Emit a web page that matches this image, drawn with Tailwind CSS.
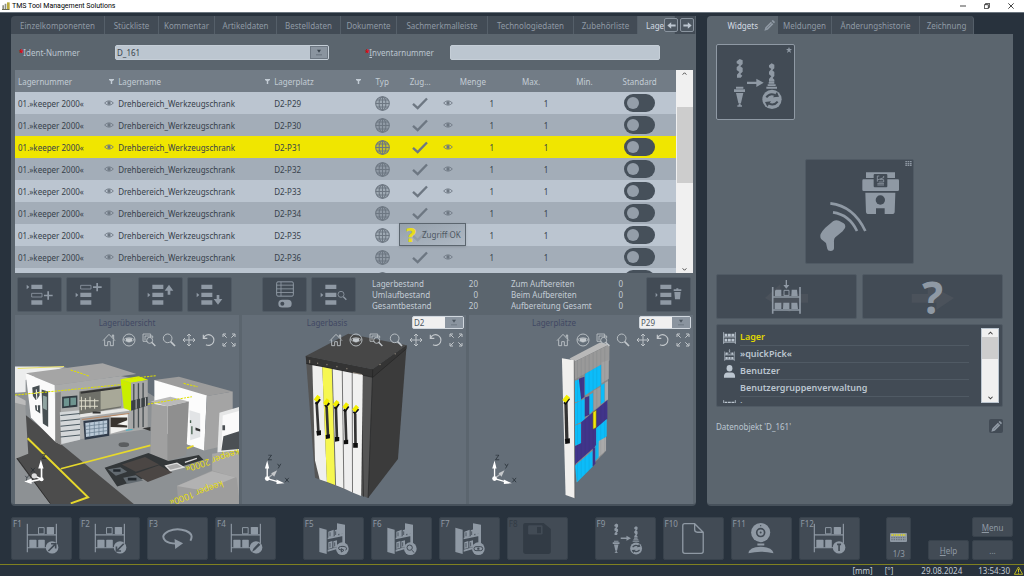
<!DOCTYPE html>
<html lang="de">
<head>
  <meta charset="UTF-8" />
  <meta name="viewport" content="width=device-width, initial-scale=1.0" />
  <title>TMS Tool Management Solutions</title>
  <script src="https://cdn.jsdelivr.net/npm/@tailwindcss/browser@4"></script>
</head>
<body class="flex h-screen flex-col overflow-hidden bg-[#28323d] font-['Noto_Sans','Open_Sans',sans-serif] text-[8px] leading-[11px] text-[#bcc6d0]">

  <!-- Icon set -->
  <svg class="hidden">
    <symbol id="eye" viewBox="0 0 30 18"><path d="M2 9C8 1 22 1 28 9C22 17 8 17 2 9Z" fill="none" stroke="currentColor" stroke-width="3"/><circle cx="15" cy="9" r="5" fill="currentColor"/></symbol>
    <symbol id="filter" viewBox="0 0 14 14"><path d="M0 0H14V3L9 6V14H5V6L0 3Z" fill="currentColor"/></symbol>
    <symbol id="globe" viewBox="0 0 44 44"><circle cx="22" cy="22" r="20" fill="currentColor" fill-opacity=".35"/><g fill="none" stroke="currentColor" stroke-width="3"><circle cx="22" cy="22" r="20"/><ellipse cx="22" cy="22" rx="10" ry="20"/><path d="M22 2V42M2 22H42M5 12H39M5 32H39"/></g></symbol>
    <symbol id="check" viewBox="0 0 48 38"><path d="M3 20L17 33L45 4" fill="none" stroke="currentColor" stroke-width="7"/></symbol>
    <symbol id="pencil" viewBox="0 0 32 32"><path d="M1 31L4 21L20 5L27 12L11 28ZM22 3L25 0Q27 0 32 6L29 10Z" fill="currentColor"/><path d="M8 24L22 10" stroke="#5b656e" stroke-width="1.5"/></symbol>
    <symbol id="arrow-left" viewBox="0 0 28 22"><path d="M1 11L13 1V8H27V14H13V21Z" fill="currentColor"/></symbol>
    <symbol id="arrow-right" viewBox="0 0 28 22"><path d="M27 11L15 1V8H1V14H15V21Z" fill="currentColor"/></symbol>
    <symbol id="chev-up" viewBox="0 0 12 8"><path d="M1 7L6 2L11 7" fill="none" stroke="currentColor" stroke-width="2.5"/></symbol>
    <symbol id="chev-down" viewBox="0 0 12 8"><path d="M1 1L6 6L11 1" fill="none" stroke="currentColor" stroke-width="2.5"/></symbol>
    <symbol id="combo" viewBox="0 0 18 20"><path d="M3 2H15L9 11Z" fill="currentColor"/><path d="M1 17H5M7 17H11M13 17H17" stroke="currentColor" stroke-width="2"/></symbol>

    <!-- row editing -->
    <symbol id="row-add-below" viewBox="0 0 81 66"><g fill="currentColor"><path d="M2 5L10 12L2 19ZM16 5H49V18H16ZM16 52H49V65H16ZM54 35H64V25H69V35H80V40H69V50H64V40H54Z"/></g><path d="M17 31H48V42H17Z" fill="none" stroke="currentColor" stroke-width="2.5"/></symbol>
    <symbol id="row-add-above" viewBox="0 0 81 66"><g fill="currentColor"><path d="M2 29L10 36L2 43ZM16 29H49V42H16ZM16 52H49V65H16ZM54 10H64V0H69V10H80V15H69V25H64V15H54Z"/></g><path d="M17 7H48V18H17Z" fill="none" stroke="currentColor" stroke-width="2.5"/></symbol>
    <symbol id="row-up" viewBox="0 0 81 66"><path fill="currentColor" d="M2 29L10 36L2 43ZM16 5H49V18H16ZM16 29H49V42H16ZM16 52H49V65H16ZM66 5L79 23H70V35H62V23H53Z"/></symbol>
    <symbol id="row-down" viewBox="0 0 81 66"><path fill="currentColor" d="M2 29L10 36L2 43ZM16 5H49V18H16ZM16 29H49V42H16ZM16 52H49V65H16ZM66 65L79 48H70V36H62V48H53Z"/></symbol>
    <symbol id="row-find" viewBox="0 0 81 66"><path fill="currentColor" d="M2 29L10 36L2 43ZM16 5H49V18H16ZM16 29H49V42H16ZM16 52H49V65H16Z"/><circle cx="63" cy="34" r="9" fill="none" stroke="currentColor" stroke-width="2.5"/><path d="M70 41L79 50" stroke="currentColor" stroke-width="4"/></symbol>
    <symbol id="row-trash" viewBox="0 0 81 66"><path fill="currentColor" d="M2 29L8 36L2 43ZM16 5H49V18H16ZM16 29H49V42H16ZM16 52H49V65H16ZM56 19H64V16H70V19H79V24H56ZM58 27H77L75 49H60Z"/></symbol>
    <symbol id="grid-switch" viewBox="0 0 54 80"><rect x="2" y="2" width="50" height="43" rx="4" fill="none" stroke="currentColor" stroke-width="3"/><path d="M2 12H52M2 23H52M2 34H52M15 2V45" stroke="currentColor" stroke-width="2.5"/><rect x="7" y="56" width="40" height="23" rx="11.5" fill="currentColor"/><circle cx="19" cy="67.500" r="6" fill="#424b55"/></symbol>

    <!-- viewer controls -->
    <symbol id="home" viewBox="0 0 42 42"><path d="M3 23L21 4L39 23M8 20V38H17V26H25V38H34V20M31 13V6H35V18" fill="none" stroke="currentColor" stroke-width="2.600"/></symbol>
    <symbol id="orbit" viewBox="0 0 42 42"><circle cx="21" cy="21" r="18" fill="none" stroke="currentColor" stroke-width="2.600"/><path d="M5 20Q21 8 37 20Q21 34 5 20Z" fill="none" stroke="currentColor" stroke-width="2"/><path d="M12 16H30V22Q21 34 12 22Z" fill="currentColor"/></symbol>
    <symbol id="zoom-area" viewBox="0 0 42 42"><path d="M16 25H3V3H26V12M9 22V9H32V15" fill="none" stroke="currentColor" stroke-width="2.400"/><circle cx="23" cy="22" r="9" fill="none" stroke="currentColor" stroke-width="2.600"/><path d="M29 28L40 39" stroke="currentColor" stroke-width="4"/></symbol>
    <symbol id="zoom" viewBox="0 0 42 42"><circle cx="17" cy="16" r="13" fill="none" stroke="currentColor" stroke-width="2.600"/><path d="M26 26L39 39" stroke="currentColor" stroke-width="5"/></symbol>
    <symbol id="pan" viewBox="0 0 42 42"><path d="M21 3V39M3 21H39M15 9L21 3L27 9M15 33L21 39L27 33M9 15L3 21L9 27M33 15L39 21L33 27" fill="none" stroke="currentColor" stroke-width="2.800"/></symbol>
    <symbol id="reset" viewBox="0 0 42 42"><path d="M4 5V16H16M5 15A16 16 0 1 1 12 35" fill="none" stroke="currentColor" stroke-width="3.500"/></symbol>
    <symbol id="expand" viewBox="0 0 42 42"><g fill="none" stroke="currentColor" stroke-width="3"><path d="M3 12V3H12M30 3H39V12M39 30V39H30M12 39H3V30M4 4L14 14M38 4L28 14M38 38L28 28M4 38L14 28"/></g></symbol>

    <!-- racks, tools and devices -->
    <symbol id="rack" viewBox="0 0 100 92"><g fill="none" stroke="currentColor" stroke-width="3.500"><path d="M4 1V88M92 1V60M4 35H92M4 74H62"/><path d="M38 13H55V32H38Z" stroke-width="3"/></g><g fill="currentColor"><rect x="63" y="11" width="22" height="22" rx="2"/><rect x="10" y="50" width="22" height="24" rx="2"/><rect x="37" y="50" width="20" height="24" rx="2"/><circle cx="79" cy="73" r="19"/></g></symbol>
    <symbol id="rack-small" viewBox="0 0 40 36"><path d="M2 0V36M38 0V36M2 15H38M2 31H38" stroke="currentColor" stroke-width="2.500"/><path fill="currentColor" d="M5 5H13V13H5ZM15 5H24V13H15ZM26 5H35V13H26ZM5 20H13V29H5ZM15 20H24V29H15ZM26 20H35V29H26Z"/></symbol>
    <symbol id="rack-pick" viewBox="0 0 90 102"><path d="M4 21V101M86 21V101M4 51H86M4 90H86" stroke="currentColor" stroke-width="5"/><path d="M38 31H53V47H38Z" fill="none" stroke="currentColor" stroke-width="3"/><path fill="currentColor" d="M14 29H30V48H11V32ZM61 29H77L79 48H60ZM12 68H30V87H10V70ZM36 68H54V87H35ZM60 68H78L80 87H60ZM43 0H47V15H54L45 26L36 15H43Z"/></symbol>
    <symbol id="cabinet" viewBox="0 0 90 96"><g fill="currentColor"><path d="M1 14L23 20V93L1 87ZM54 1L78 5V62H70V30L54 34ZM28 26L44 20V40L28 44ZM47 22L58 18V37L47 40ZM61 20L70 17V34L61 37ZM26 44L72 34V39L26 49ZM28 58L40 54V74L28 78ZM43 55L54 52V71L43 74ZM26 80L52 73V79L26 86Z"/><circle cx="70" cy="77" r="19"/></g><path d="M33 28V40M50 25V36M33 60V73M47 58V70" stroke="#424b55" stroke-width="2.500"/></symbol>
    <symbol id="tool-change" viewBox="98 172 150 156"><g fill="currentColor"><path d="M109 182L118 175L127 179V190L120 197L127 202V213L120 220L126 225L121 231H110V222L117 214L109 208V200L117 192L109 188Z"/><path d="M206 194L214 188L222 192V203L216 209L222 214V226L217 232L222 237V243H206V235L213 227L206 221V213L213 205L206 200Z"/><path d="M107 258H129V264H107ZM101 266H134V274H101ZM107 277H129L122 307H114ZM115 308H121V314H125V318H111V314H115ZM205 244H222V249H205ZM202 251H226V256H202ZM198 258H230V264H198ZM140 243H168V234L190 246L168 259V250H140Z"/><circle cx="215" cy="296" r="29"/></g><path d="M198 290Q208 276 224 283M232 303Q222 316 206 309" fill="none" stroke="#424b55" stroke-width="6"/><path d="M218 290L236 288L230 274ZM212 302L194 304L201 318Z" fill="#424b55"/></symbol>
    <symbol id="scan" viewBox="360 65 240 240"><g fill="currentColor"><path d="M498 66H585V83H498ZM490 87H594Q597 87 597 91V118Q597 122 593 122H491Q487 122 487 118V91Q487 87 490 87ZM496 127H586L584 186Q583 191 579 191H554V174H528V191H503Q499 191 498 186Z"/><path d="M399 213Q407 208 417 211L431 219Q438 224 435 233L428 243L406 261Q401 266 402 275V294Q401 302 392 302Q383 302 382 296L378 278L364 267Q359 260 362 251Q366 242 376 232Z"/></g><rect x="521" y="71" width="41" height="40" rx="3" fill="#424b55"/><circle cx="541" cy="149" r="14" fill="#424b55"/><path d="M532 77V94M532 77H538M551 77V82L532 89M540 88H551V95H536M532 100H552M532 104H552" fill="none" stroke="currentColor" stroke-width="2.500"/><path d="M391 159Q461 167 496 242M399 186Q448 193 471 242" fill="none" stroke="currentColor" stroke-width="8"/></symbol>
    <symbol id="star" viewBox="0 0 20 20"><path fill="currentColor" d="M10 0L13 7H20L14 12L17 20L10 15L3 20L6 12L0 7H7Z"/></symbol>
    <symbol id="dots" viewBox="0 0 20 16"><path fill="currentColor" d="M0 0H5V4H0ZM7 0H12V4H7ZM14 0H20V4H14ZM0 6H5V10H0ZM7 6H12V10H7ZM14 6H20V10H14ZM0 12H5V16H0ZM7 12H12V16H7ZM14 12H20V16H14Z"/></symbol>
    <symbol id="user" viewBox="0 0 36 40"><ellipse cx="18" cy="10" rx="9" ry="10" fill="currentColor"/><path d="M1 39V33Q2 24 11 23H25Q34 24 35 33V39Z" fill="currentColor"/></symbol>
    <symbol id="rotate" viewBox="0 0 94 66"><path d="M86 38Q98 18 72 8Q46 -2 20 9Q-6 22 10 38Q20 46 44 47" fill="none" stroke="currentColor" stroke-width="6"/><path d="M38 33L64 46L40 63Z" fill="currentColor"/></symbol>
    <symbol id="floppy" viewBox="0 0 84 94"><path fill="currentColor" d="M6 0H62L84 18V86Q84 94 76 94H8Q0 94 0 86V6Q0 0 6 0Z"/><rect x="15" y="7" width="44" height="28" rx="4" fill="#424b55"/><rect x="42" y="12" width="12" height="19" fill="currentColor"/></symbol>
    <symbol id="page" viewBox="0 0 66 94"><path d="M38 2H8Q2 2 2 8V86Q2 92 8 92H58Q64 92 64 86V28L38 2V20Q38 28 46 28H64" fill="none" stroke="currentColor" stroke-width="4"/></symbol>
    <symbol id="webcam" viewBox="0 0 78 94"><circle cx="38" cy="29" r="29" fill="currentColor"/><circle cx="38" cy="29" r="12" fill="none" stroke="#424b55" stroke-width="5"/><circle cx="38" cy="29" r="3" fill="#424b55"/><circle cx="38" cy="8" r="2" fill="#424b55"/><path fill="currentColor" d="M28 62H49V68H28ZM1 92Q3 73 38 72Q74 73 77 92Q38 82 1 92Z"/></symbol>

    <!-- coordinate axes of the tilted views -->
    <symbol id="axes" viewBox="0 0 84 96"><g stroke="#fff" stroke-width="4"><path d="M10 72V32M10 72L44 82"/><path d="M10 72L30 57" stroke="#b5b9bd"/></g><path d="M10 18L16 42H3ZM62 86L38 75V88Z" fill="#fff"/><path d="M40 47L22 56L31 67Z" fill="#c6c9cc"/><circle cx="10" cy="72" r="7" fill="#fff"/><path d="M13 2H23L13 16H24M41 28L46 35M51 28L43 42M64 70L75 83M75 70L64 83" fill="none" stroke="#222a31" stroke-width="2.200"/></symbol>
  </svg>

  <!-- Window title bar -->
  <header class="flex h-[13px] shrink-0 items-center justify-between border-b border-[#6b757f] bg-white pr-2.5 pl-0.5 text-black">
    <div class="flex items-center gap-0.5">
      <svg class="h-2 w-2" viewBox="0 0 24 24"><path d="M1 10H6V22H1ZM8 5H13V22H8Z" fill="#8c8f86"/><path d="M15 1H23V23H15Z" fill="#b9a93c"/><path d="M0 21H22V24H0Z" fill="#6b6b50"/></svg>
      <h1 class="font-[Roboto,sans-serif] text-[7px]">TMS Tool Management Solutions</h1>
    </div>
    <div class="flex items-center gap-[18px]">
      <button aria-label="Minimieren"><svg class="h-1.5 w-1.5" viewBox="0 0 18 18"><path d="M0 9H18" stroke="#222" stroke-width="2.500"/></svg></button>
      <button aria-label="Wiederherstellen"><svg class="h-1.5 w-1.5" viewBox="0 0 18 18"><path d="M1 5H13V17H1ZM5 5V1H17V13H13" fill="none" stroke="#222" stroke-width="2.500"/></svg></button>
      <button aria-label="Schließen"><svg class="h-1.5 w-1.5" viewBox="0 0 18 18"><path d="M1 1L17 17M17 1L1 17" stroke="#222" stroke-width="2.500"/></svg></button>
    </div>
  </header>

  <main class="grid min-h-0 flex-1 grid-cols-[685fr_306fr] gap-[11px] px-[11px] pt-[3px]">

    <!-- Left side -->
    <section class="flex min-h-0 min-w-0 flex-col">
      <nav class="relative grid h-[18px] shrink-0 grid-cols-[94fr_54fr_56fr_62fr_64fr_56fr_91fr_86fr_64fr_37fr_21fr] text-center text-[#8f99a4] *:overflow-hidden *:border-r *:border-[#555f69] *:bg-[#424b55] *:whitespace-nowrap">
        <button class="rounded-tl-sm">Einzelkomponenten</button>
        <button>Stückliste</button>
        <button>Kommentar</button>
        <button>Artikeldaten</button>
        <button>Bestelldaten</button>
        <button>Dokumente</button>
        <button>Sachmerkmalleiste</button>
        <button>Technologiedaten</button>
        <button>Zubehörliste</button>
        <button class="bg-[#5b656e]! pl-2 text-left text-[#d3dbe3]">Lage</button>
        <span></span>
        <div class="absolute top-0.5 right-0.5 flex gap-0.5 border-0! bg-transparent!">
          <button class="flex h-[14px] w-[14px] items-center justify-center rounded-xs border border-[#8a949f] bg-[#4d5761] text-[#bcc6d0]" aria-label="Zurück"><svg class="h-[7px] w-[9px]"><use href="#arrow-left"/></svg></button>
          <button class="flex h-[14px] w-[14px] items-center justify-center rounded-xs border border-[#8a949f] bg-[#4d5761] text-[#bcc6d0]" aria-label="Weiter"><svg class="h-[7px] w-[9px]"><use href="#arrow-right"/></svg></button>
        </div>
      </nav>

      <div class="flex min-h-0 flex-1 flex-col rounded-b-sm border-b-2 border-[#47515b] bg-[#5b656e] pr-[3px] pl-1">

        <!-- Ident / Inventory -->
        <form class="grid h-9 shrink-0 grid-cols-[100fr_214fr_121fr_210fr_33fr] items-center">
          <label for="ident" class="flex pl-1"><b class="text-red-600">*</b>Ident-Nummer</label>
          <div class="flex h-[15px] overflow-hidden rounded-xs border border-[#c5ced7] bg-[#bcc6d0] text-[#3a444e]">
            <input id="ident" value="D_161" class="min-w-0 flex-1 pl-px outline-none" />
            <button type="button" class="flex w-[18px] items-center justify-center border border-[#6d7782] bg-[#8a949f]" aria-label="Auswahl"><svg class="h-[7px] w-1.5"><use href="#combo"/></svg></button>
          </div>
          <label for="inventar" class="flex pl-9"><b class="text-red-600">*</b><span><u>I</u>nventarnummer</span></label>
          <input id="inventar" class="h-[15px] rounded-xs border border-[#c5ced7] bg-[#bcc6d0] px-1 text-[#3a444e] outline-none" />
        </form>

        <!-- Storage table -->
        <div class="relative flex h-[203px] shrink-0 overflow-hidden">
          <div class="min-w-0 flex-1">
            <table class="w-full table-fixed text-left whitespace-nowrap text-[#37414b]">
              <colgroup>
                <col class="w-[15.3%]" /><col class="w-[23.6%]" /><col class="w-[14%]" /><col class="w-[5.3%]" /><col class="w-[9.1%]" /><col class="w-[8.2%]" /><col class="w-[8.2%]" /><col class="w-[5.3%]" /><col class="w-[11%]" />
              </colgroup>
              <thead class="h-[22px] bg-[#727c86] text-[#c3ccd5]">
                <tr class="*:p-0 *:font-normal">
                  <th><div class="flex items-center justify-between pr-0.5 pl-[3px]">Lagernummer <svg class="h-[5px] w-[5px]"><use href="#filter"/></svg></div></th>
                  <th><div class="flex items-center justify-between pr-0.5 pl-0.5">Lagername <svg class="h-[5px] w-[5px]"><use href="#filter"/></svg></div></th>
                  <th><div class="flex items-center justify-between pr-1 pl-0.5">Lagerplatz <svg class="h-[5px] w-[5px]"><use href="#filter"/></svg></div></th>
                  <th><div class="text-center">Typ</div></th>
                  <th><div class="pl-2.5">Zug...</div></th>
                  <th>Menge</th>
                  <th><div class="pl-2">Max.</div></th>
                  <th><div class="pl-2">Min.</div></th>
                  <th><div class="text-center">Standard</div></th>
                </tr>
              </thead>
              <tbody id="storageRows"></tbody>
            </table>
          </div>

          <div class="flex w-[17px] flex-col items-center justify-between bg-[#f0f0f0] py-0.5 text-[#404040]">
            <svg class="h-[3px] w-[5px]"><use href="#chev-up"/></svg>
            <svg class="h-[3px] w-[5px]"><use href="#chev-down"/></svg>
          </div>
          <div class="absolute top-[37px] right-0 h-[76px] w-4 bg-[#cdcdcd]"></div>

          <!-- Tooltip -->
          <div role="tooltip" class="absolute top-[153px] left-[384px] flex h-[23px] w-[67px] items-center gap-1 border border-[#5b656e] bg-linear-to-br from-[#8d98a3]/80 to-[#acb6c1]/80 pl-1 text-[#4d5761] shadow-sm">
            <b class="w-3.5 text-center font-['DejaVu_Sans'] text-[20px] leading-[20px] text-[#e8dc1c]">?</b>Zugriff OK
          </div>
        </div>

        <!-- Row toolbar -->
        <div class="grid h-[42px] shrink-0 grid-cols-[121fr_124fr_110fr_139fr_135fr_47fr] items-center pl-0.5 text-[#8f99a4]">
          <div class="flex gap-1">
            <button class="flex h-[35px] w-[45px] items-center justify-center rounded-xs border border-[#505a64] bg-[#424b55]" aria-label="Zeile darunter"><svg class="h-[22px] w-[27px]"><use href="#row-add-below"/></svg></button>
            <button class="flex h-[35px] w-[45px] items-center justify-center rounded-xs border border-[#505a64] bg-[#424b55]" aria-label="Zeile darüber"><svg class="h-[22px] w-[27px]"><use href="#row-add-above"/></svg></button>
          </div>
          <div class="flex gap-1">
            <button class="flex h-[35px] w-[45px] items-center justify-center rounded-xs border border-[#505a64] bg-[#424b55]" aria-label="Nach oben"><svg class="h-[22px] w-[27px]"><use href="#row-up"/></svg></button>
            <button class="flex h-[35px] w-[45px] items-center justify-center rounded-xs border border-[#505a64] bg-[#424b55]" aria-label="Nach unten"><svg class="h-[22px] w-[27px]"><use href="#row-down"/></svg></button>
          </div>
          <div class="flex gap-1">
            <button class="flex h-[35px] w-[45px] items-center justify-center rounded-xs border border-[#505a64] bg-[#424b55]" aria-label="Tabellenansicht"><svg class="h-[27px] w-[18px]"><use href="#grid-switch"/></svg></button>
            <button class="flex h-[35px] w-[45px] items-center justify-center rounded-xs border border-[#505a64] bg-[#424b55]" aria-label="Suchen"><svg class="h-[22px] w-[27px]"><use href="#row-find"/></svg></button>
          </div>
          <dl class="grid w-[106px] grid-cols-[1fr_auto] text-[#c3ccd5] *:even:text-right">
            <dt>Lagerbestand</dt><dd>20</dd>
            <dt>Umlaufbestand</dt><dd>0</dd>
            <dt>Gesamtbestand</dt><dd>20</dd>
          </dl>
          <dl class="grid w-[112px] grid-cols-[1fr_auto] text-[#c3ccd5] *:even:text-right">
            <dt>Zum Aufbereiten</dt><dd>0</dd>
            <dt>Beim Aufbereiten</dt><dd>0</dd>
            <dt>Aufbereitung Gesamt</dt><dd>0</dd>
          </dl>
          <button class="flex h-[35px] w-[45px] items-center justify-center rounded-xs border border-[#505a64] bg-[#424b55]" aria-label="Löschen"><svg class="h-[22px] w-[27px]"><use href="#row-trash"/></svg></button>
        </div>

        <!-- 3D views -->
        <div class="grid min-h-0 flex-1 grid-cols-3 gap-[3px]">

          <article class="relative overflow-hidden bg-[#646e78]">
            <svg class="absolute inset-0 h-full w-full" viewBox="12 6 675 564" preserveAspectRatio="none">
              <path d="M12 162L150 158L400 230L640 380L690 400V570H12Z" fill="#8d9194"/>
              <path d="M46 306L370 570H118L12 430V300Z" fill="#4c4c4c"/>
              <path d="M12 430L110 570H12Z" fill="#8d9194"/>
              <path d="M12 425L118 568" stroke="#222" stroke-width="2"/>
              <path d="M12 160H80L160 163L44 200V236L12 238Z" fill="#eceded"/>
              <path d="M20 166L160 160" stroke="#e8e06a" stroke-width="3"/>
              <path d="M12 245L42 260L52 420L12 436Z" fill="#9b9d9e"/>
              <path d="M12 245L44 262V275L12 268Z" fill="#bbb"/>
              <!-- machine hall -->
              <path d="M44 180L276 150L378 182L132 216Z" fill="#a5a5a5"/>
              <path d="M44 180L132 216L134 385L60 312Z" fill="#fafafa"/>
              <path d="M92 228L112 234V340L96 330Z" fill="#474f52"/>
              <path d="M96 246L108 250V290L96 284Z" fill="#8fa3a0"/>
              <path d="M64 222L86 216V246L76 262L66 248ZM72 275H88V300L74 290Z" fill="#474f52"/>
              <path d="M76 228L80 290M70 240L90 236M70 262L90 258" stroke="#fff" stroke-width="3"/>
              <path d="M132 216L330 188L410 204V346L212 376L150 393L134 385Z" fill="#a9aaaa"/>
              <path d="M134 238L150 236V393L134 385Z" fill="#888"/>
              <path d="M154 250L200 246V280L154 284Z" fill="#2f3940"/>
              <path d="M159 255L175 254V277L159 279ZM179 253L196 252V274L179 276Z" fill="#6e9490"/>
              <path d="M147 296L208 290V378L152 391Z" fill="#d4d7d9"/>
              <path d="M149 306L208 300M149 322L208 316M149 338L208 332M149 354L208 348M149 370L208 364" stroke="#4c5961" stroke-width="3"/>
              <path d="M206 234L332 217V282L206 304Z" fill="#6f7069"/>
              <path d="M270 232L332 222V278L270 288Z" fill="#a8a898"/>
              <path d="M212 250V290M224 254V288M238 250V284M252 256V286M206 262H264M206 278H262" stroke="#dedccb" stroke-width="3"/>
              <path d="M210 238L330 222" stroke="#333" stroke-width="6"/>
              <path d="M208 302L356 282V292L208 312Z" fill="#e7e7e5"/>
              <path d="M218 322L296 314V366L222 378Z" fill="#303b4a"/>
              <path d="M224 328L290 320V360L226 370Z" fill="#b9c8d6"/>
              <path d="M224 338L290 330M225 348L290 341M226 359L290 351M237 326V370M251 324V368M265 323V366M278 321V363" stroke="#63788b" stroke-width="2"/>
              <path d="M300 308L352 300V346L300 360Z" fill="#f2f2f0"/>
              <path d="M300 312H350V320L320 332L350 336V342L300 340Z" fill="#39342f"/>
              <path d="M246 294H270V300H246Z" fill="#333"/>
              <path d="M214 318L356 300" stroke="#b88763" stroke-width="3"/>
              <!-- highlighted cabinet -->
              <path d="M330 198L385 189L414 200L362 208Z" fill="#d6f400"/>
              <path d="M330 198L362 208V292L340 284Z" fill="#c9ee00"/>
              <path d="M362 208L412 200V340L362 350Z" fill="#a7a7a7"/>
              <path d="M370 212V344M384 210V342M398 208V340" stroke="#444c50" stroke-width="4"/>
              <path d="M362 262L412 250V276L362 292Z" fill="#3b4144"/>
              <path d="M377 258V286M391 254V282M405 252V278" stroke="#bbb" stroke-width="3"/>
              <path d="M346 350L366 348" stroke="#3fb3c8" stroke-width="3"/>
              <path d="M396 344L420 340V352Z" fill="#333"/>
              <!-- second machine -->
              <path d="M432 200L506 190L668 234L580 250Z" fill="#9c9c9c"/>
              <path d="M432 200L590 246L582 410L530 392L432 340Z" fill="#fcfcfc"/>
              <path d="M590 248L668 234V390L582 410Z" fill="#a4a4a4"/>
              <path d="M538 290L570 300V370L540 380Z" fill="#e2e4e6"/>
              <path d="M541 320V328M545 338V362" stroke="#46604f" stroke-width="4"/>
              <path d="M556 342L570 347V354L556 350Z" fill="#333"/>
              <path d="M420 264L480 250L536 264L470 278Z" fill="#bababa"/>
              <path d="M424 270L472 278V442L420 420Z" fill="#a0a0a0"/>
              <path d="M472 278L536 264L528 424L472 442Z" fill="#8f8f8f"/>
              <path d="M628 298L690 280V410L622 416Z" fill="#e6e7e7"/>
              <path d="M638 306L690 292V404L634 408Z" fill="#fafafa"/>
              <path d="M637 335H645V350H637ZM640 368L690 352V406L634 410Z" fill="#4b5054"/>
              <!-- pallets -->
              <path d="M282 462L414 418L474 442L566 424L580 438L320 518Z" fill="#333739"/>
              <path d="M334 452L404 430L446 452L376 474Z" fill="#4b4644"/>
              <path d="M374 480L446 454L486 476L412 504Z" fill="#4b4644"/>
              <path d="M292 466L330 460L350 474L316 486ZM338 492L376 484L398 500L350 510Z" fill="#626a70"/>
              <path d="M308 466H330V474H308ZM352 492H378V500H352Z" fill="#242a2f"/>
              <path d="M466 456L500 448L520 460L480 470ZM524 446L560 434" stroke="#ddd" stroke-width="4" fill="#aaa"/>
              <ellipse cx="340" cy="393" rx="16" ry="7" fill="#5a5d5f"/>
              <!-- floor markings -->
              <g fill="none" stroke="#e6d82c" stroke-width="6">
                <path d="M50 374L232 550L180 568"/><path d="M150 465L420 395M530 404L550 396" stroke-width="5"/>
              </g>
              <g fill="none" stroke="#dfe000" stroke-width="3" stroke-dasharray="7 3"><path d="M12 245L350 212M180 170L235 188M360 196L436 187M412 272L545 250M520 210L562 220"/></g>
              <path d="M606 420L650 414L690 420V570H606Z" fill="#a8a8a8"/>
              <path d="M500 516L606 470L680 492L690 570H504Z" fill="#9d9d9d"/>
              <path d="M500 516L606 472L676 490L580 530Z" fill="#b2b2b2"/>
              <g fill="#e4dc10" class="font-['Noto_Sans'] text-[27px]">
                <text transform="translate(636 500) rotate(160)">keeper 1000«</text>
                <text transform="translate(686 405) rotate(162)">keeper 2000«</text>
              </g>
              <!-- axes -->
              <g stroke="#fff" stroke-width="5"><path d="M92 496V458M92 496L52 504M92 496L70 486"/></g>
              <path d="M90 438L98 464H82ZM40 503L62 494V510Z" fill="#fff"/>
              <circle cx="92" cy="496" r="6" fill="#fff"/><circle cx="70" cy="486" r="8" fill="#ddd"/>
              <path d="M60 462L72 476M72 462L60 476M43 486L48 492L54 484M48 492L46 500M94 422H104L94 434H105" fill="none" stroke="#222a31" stroke-width="2"/>
            </svg>
            <h2 class="relative mt-0.5 text-center text-[#414863]">Lagerübersicht</h2>
            <div class="relative mt-[5px] flex justify-end gap-1.5 pr-[3px] text-[#c3c8cc]" data-viewer></div>
          </article>

          <article class="relative overflow-hidden bg-[#646e78]">
            <svg class="absolute inset-0 h-full w-full" viewBox="6 6 675 564" preserveAspectRatio="none">
              <path d="M198 128L326 62L502 96L400 168Z" fill="#474747"/>
              <path d="M198 128L400 168L386 552L226 492Z" fill="#555"/>
              <path d="M400 168L502 96L476 436L386 552Z" fill="#3b3b3b"/>
              <path d="M198 128L400 168L502 96V106L400 192L200 152Z" fill="#343434"/>
              <path d="M200 150L400 192L500 108M364 184L372 548M400 168L386 552" fill="none" stroke="#222" stroke-width="2"/>
              <path d="M210 140V150M234 148V152M262 152V156M292 158V162M322 164V168M340 178L368 184M420 154H424M466 122H470" stroke="#c5b7a5" stroke-width="2"/>
              <path d="M218 156L248 161L262 504L240 497L226 440Z" fill="#efefee"/>
              <path d="M248 161L278 167L288 514L262 504Z" fill="#f6f750"/>
              <path d="M278 167L308 173L313 524L288 514Z" fill="#f0f0ee"/>
              <path d="M308 173L338 179L339 536L313 524Z" fill="#eee"/>
              <path d="M338 179L370 185L365 546L339 536Z" fill="#f1f1f0"/>
              <path d="M278 167L288 514M308 173L313 524M338 179L339 536" stroke="#4a4a4a" stroke-width="2"/>
              <path d="M231 268L236 352M261 280L265 364M289 284L292 372M317 290L320 380M347 300L348 390" stroke="#333" stroke-width="8"/>
              <path d="M229 272L240 256M257 280L268 268M286 286L297 270M314 294L326 278M343 300L356 286" stroke="#111" stroke-width="9"/>
              <path d="M227 262L238 248M255 272L266 258M284 277L295 263M313 284L324 270M342 292L354 278" stroke="#f3ee00" stroke-width="12"/>
              <path d="M230 352L244 350V364L232 366ZM258 364L271 362V374L259 376ZM286 370L299 370V382L286 384ZM313 380L326 378V391L313 392ZM341 388L355 388V402H341Z" fill="#0d0d0d"/>
              <use href="#axes" x="72" y="422" width="84" height="96"/>
            </svg>
            <div class="relative flex h-3.5 items-start">
              <h2 class="mt-0.5 flex-1 text-center text-[#414863]"><label for="basis">Lagerbasis</label></h2>
              <div class="relative mt-px mr-0.5 h-[13px] w-[52px] text-[#4d5761]">
                <select id="basis" class="h-full w-full appearance-none rounded-xs border border-[#d0d7de] bg-[#f0f0f0] pl-px leading-[11px] outline-none"><option>D2</option></select>
                <span class="pointer-events-none absolute inset-y-px right-px flex w-[18px] items-center justify-center bg-[#8a949f]"><svg class="h-[7px] w-1.5"><use href="#combo"/></svg></span>
              </div>
            </div>
            <div class="relative mt-1 flex justify-end gap-1.5 pr-[3px] text-[#c3c8cc]" data-viewer></div>
          </article>

          <article class="relative overflow-hidden bg-[#646e78]">
            <svg class="absolute inset-0 h-full w-full" viewBox="9 6 675 564" preserveAspectRatio="none">
              <path d="M312 136L404 88L432 94L326 146Z" fill="#b9b9b9"/>
              <path d="M326 146L432 94L420 414L332 506Z" fill="#8b8b8b"/>
              <path d="M326 146L432 94V142L328 198Z" fill="#999"/>
              <path d="M328 202L347 196V262L328 266Z" fill="#0cbcf9"/>
              <path d="M340 196L357 190V250L347 258Z" fill="#41348a"/>
              <path d="M358 182L408 154V214L358 246Z" fill="#0cbcf9"/>
              <path d="M408 148L430 140V196L408 210Z" fill="#a2a2a2"/>
              <path d="M328 270L358 256V320L328 334Z" fill="#0cbcf9"/>
              <path d="M358 252L372 248V304L358 310Z" fill="#41348a"/>
              <path d="M372 244L384 238V290L372 302Z" fill="#0cbcf9"/>
              <path d="M384 232L406 220V274L384 292Z" fill="#9c9c9c"/>
              <path d="M406 216L418 210V264L406 272Z" fill="#0cbcf9"/>
              <path d="M418 208L428 204V258L418 264Z" fill="#aaa"/>
              <path d="M328 336L347 330V392L328 396Z" fill="#0cbcf9"/>
              <path d="M347 326L426 260V316L392 346V396L328 452V398L347 388Z" fill="#41348a"/>
              <path d="M392 344L424 316V368L392 394Z" fill="#0cbcf9"/>
              <path d="M328 456L382 410V458L334 506Z" fill="#0cbcf9"/>
              <path d="M382 404L390 400V450L382 458Z" fill="#41348a"/>
              <path d="M390 396L400 386V430L390 442Z" fill="#0cbcf9"/>
              <path d="M400 382L422 370V410L400 430Z" fill="#aaa"/>
              <g stroke="#26303a" stroke-opacity=".16" stroke-width="1.500"><path d="M336 140V500M347 136V490M359 130V480M371 124V470M383 118V458M394 112V446M406 106V430M418 100V418"/></g>
              <path d="M383 296L392 290V342L383 346Z" fill="#f3e90c" stroke="#8c8400" stroke-width="1.500"/>
              <path d="M289 135L326 141L328 553L300 543Z" fill="#f0efed"/>
              <path d="M326 141L328 553" stroke="#555" stroke-width="2"/>
              <path d="M301 266L304 380" stroke="#333" stroke-width="10"/>
              <path d="M297 272L310 254" stroke="#111" stroke-width="9"/>
              <path d="M295 264L308 248" stroke="#f3ee00" stroke-width="13"/>
              <path d="M298 376L313 374V389L299 391Z" fill="#0d0d0d"/>
              <use href="#axes" x="76" y="422" width="84" height="96"/>
            </svg>
            <div class="relative flex h-3.5 items-start">
              <h2 class="mt-0.5 flex-1 text-center text-[#414863]"><label for="platz">Lagerplätze</label></h2>
              <div class="relative mt-px mr-0.5 h-[13px] w-[52px] text-[#4d5761]">
                <select id="platz" class="h-full w-full appearance-none rounded-xs border border-[#d0d7de] bg-[#f0f0f0] pl-px leading-[11px] outline-none"><option>P29</option></select>
                <span class="pointer-events-none absolute inset-y-px right-px flex w-[18px] items-center justify-center bg-[#8a949f]"><svg class="h-[7px] w-1.5"><use href="#combo"/></svg></span>
              </div>
            </div>
            <div class="relative mt-1 flex justify-end gap-1.5 pr-[3px] text-[#c3c8cc]" data-viewer></div>
          </article>
        </div>
      </div>
    </section>

    <!-- Right side -->
    <aside class="flex min-h-0 min-w-0 flex-col">
      <nav class="grid h-[18px] shrink-0 grid-cols-[71fr_54fr_88fr_54fr_39fr] text-[#8f99a4]">
        <button class="flex items-center justify-end gap-1.5 rounded-tl-sm bg-[#5b656e] pr-[3px] text-[#d3dbe3]">Widgets <svg class="h-[11px] w-[11px] text-[#8f99a4]"><use href="#pencil"/></svg></button>
        <button class="border-r border-[#555f69] bg-[#424b55]">Meldungen</button>
        <button class="border-r border-[#555f69] bg-[#424b55]">Änderungshistorie</button>
        <button class="rounded-tr-sm border-r border-[#555f69] bg-[#424b55]">Zeichnung</button>
      </nav>

      <div class="flex min-h-0 flex-1 flex-col rounded-b-sm border-b-2 border-[#47515b] bg-[#5b656e] pt-2.5 pr-2.5 pl-[9px] text-[#8f99a4]">
        <button class="relative flex h-[76px] w-[79px] shrink-0 items-center justify-center rounded-xs border border-[#8f99a4] bg-[#424b55]" aria-label="Werkzeugwechsel">
          <svg class="mt-1 ml-1 h-[52px] w-[50px]"><use href="#tool-change"/></svg>
          <svg class="absolute top-0.5 right-0.5 h-1.5 w-1.5"><use href="#star"/></svg>
        </button>

        <button class="relative mx-auto mt-[39px] flex h-[105px] w-[109px] shrink-0 items-center justify-center rounded-xs border border-[#505a64] bg-[#424b55]" aria-label="Scannen">
          <svg class="h-20 w-20"><use href="#scan"/></svg>
          <svg class="absolute top-px right-px h-[5px] w-[7px]"><use href="#dots"/></svg>
        </button>

        <div class="mt-2.5 grid shrink-0 grid-cols-2 gap-[5px]">
          <button class="flex h-[45px] items-center justify-center rounded-xs border border-[#505a64] bg-[#424b55]" aria-label="Einlagern">
            <svg class="h-[34px] w-[43px]" viewBox="0 0 129 102"><path d="M0 54L46 12V42H129V68H76V98Z" fill="#4b525b"/><use href="#rack-pick" x="19" width="90" height="102"/></svg>
          </button>
          <button class="relative flex h-[45px] items-center justify-center rounded-xs border border-[#505a64] bg-[#424b55]" aria-label="Hilfe">
            <svg class="h-[34px] w-[43px]" viewBox="0 0 129 102"><path d="M2 42H50V12L129 54L76 90V68H2Z" fill="#4b525b"/></svg>
            <b class="absolute inset-0 text-center font-['Noto_Sans'] text-[44px] leading-[44px]">?</b>
          </button>
        </div>

        <!-- Module list -->
        <div class="mt-[5px] flex h-[83px] shrink-0 justify-between rounded-xs border border-[#505a64] bg-[#424b55] py-[3px] pr-[3px] pl-1.5 text-[#bcc6d0]">
          <ul class="mr-3 flex-1 overflow-hidden pt-px text-[9px] leading-4 font-semibold">
            <li class="flex h-[17px] items-center gap-1 text-[#e0d800]"><svg class="h-3 w-[13px] text-[#bcc6d0]"><use href="#rack-small"/></svg><a href="#" class="flex-1 border-b border-[#505a64]">Lager</a></li>
            <li class="flex h-[17px] items-center gap-1"><svg class="h-3 w-[13px]"><use href="#rack-pick"/></svg><a href="#" class="flex-1 border-b border-[#505a64]">»quickPick«</a></li>
            <li class="flex h-[17px] items-center gap-1"><svg class="h-[13px] w-[13px]"><use href="#user"/></svg><a href="#" class="flex-1 border-b border-[#505a64]">Benutzer</a></li>
            <li class="flex h-[17px] items-center pl-[17px]"><a href="#" class="flex-1 border-b border-[#505a64]">Benutzergruppenverwaltung</a></li>
            <li class="flex h-[17px] items-center gap-1"><svg class="h-3 w-[13px]"><use href="#rack-small"/></svg><a href="#" class="flex-1">i</a></li>
          </ul>
          <div class="flex w-[18px] flex-col items-center border border-[#bcc6d0] bg-[#f0f0f0] text-[#404040]">
            <svg class="my-0.5 h-1 w-[5px] shrink-0"><use href="#chev-up"/></svg>
            <div class="h-[22px] w-full bg-[#cdcdcd]"></div>
            <svg class="mt-auto mb-0.5 h-1 w-[5px] shrink-0"><use href="#chev-down"/></svg>
          </div>
        </div>

        <div class="mt-3 flex items-center justify-between text-[#bcc6d0]">
          <p>Datenobjekt 'D_161'</p>
          <button class="flex h-3.5 w-3.5 items-center justify-center rounded-xs bg-[#424b55] text-[#8f99a4]" aria-label="Bearbeiten"><svg class="h-[11px] w-[11px]"><use href="#pencil"/></svg></button>
        </div>
      </div>
    </aside>
  </main>

  <!-- Function keys -->
  <footer class="flex h-[58px] shrink-0 items-end justify-between px-[11px] pb-1 text-[#8f99a4]">
    <div class="flex gap-[7px]">
      <button class="relative flex h-[43px] w-[61px] items-center justify-center rounded-xs border border-[#38424c] bg-[#424b55]"><span class="absolute top-0 left-px">F1</span>
        <svg class="ml-px h-[31px] w-[33px]" viewBox="0 0 100 92"><use href="#rack"/><path d="M68 84L88 64M76 62H90V76" fill="none" stroke="#424b55" stroke-width="5"/></svg></button>
      <button class="relative flex h-[43px] w-[61px] items-center justify-center rounded-xs border border-[#38424c] bg-[#424b55]"><span class="absolute top-0 left-px">F2</span>
        <svg class="ml-px h-[31px] w-[33px]" viewBox="0 0 100 92"><use href="#rack"/><path d="M90 62L70 82M68 70V84H82" fill="none" stroke="#424b55" stroke-width="5"/></svg></button>
      <button class="relative flex h-[43px] w-[61px] items-center justify-center rounded-xs border border-[#38424c] bg-[#424b55]"><span class="absolute top-0 left-px">F3</span>
        <svg class="h-[22px] w-[31px]"><use href="#rotate"/></svg></button>
      <button class="relative flex h-[43px] w-[61px] items-center justify-center rounded-xs border border-[#38424c] bg-[#424b55]"><span class="absolute top-0 left-px">F4</span>
        <svg class="ml-px h-[31px] w-[33px]" viewBox="0 0 100 92"><use href="#rack"/><path d="M67 86L71 76L87 60L92 65L76 81Z" fill="#424b55"/></svg></button>
    </div>
    <div class="flex gap-[7px]">
      <button class="relative flex h-[43px] w-[61px] items-center justify-center rounded-xs border border-[#38424c] bg-[#424b55]"><span class="absolute top-0 left-px">F5</span>
        <svg class="ml-px h-8 w-[30px]" viewBox="0 0 90 96"><use href="#cabinet"/><path d="M80 82Q88 72 72 70Q54 70 60 79L69 82M67 77V87L75 82Z" fill="none" stroke="#424b55" stroke-width="3"/></svg></button>
      <button class="relative flex h-[43px] w-[61px] items-center justify-center rounded-xs border border-[#38424c] bg-[#424b55]"><span class="absolute top-0 left-px">F6</span>
        <svg class="ml-px h-8 w-[30px]" viewBox="0 0 90 96"><use href="#cabinet"/><path d="M74 81L82 89M76 74A8 8 0 1 1 60 74A8 8 0 1 1 76 74Z" fill="none" stroke="#424b55" stroke-width="3"/></svg></button>
      <button class="relative flex h-[43px] w-[61px] items-center justify-center rounded-xs border border-[#38424c] bg-[#424b55]"><span class="absolute top-0 left-px">F7</span>
        <svg class="ml-px h-8 w-[30px]" viewBox="0 0 90 96"><use href="#cabinet"/><rect x="57" y="71" width="26" height="12" rx="6" fill="none" stroke="#424b55" stroke-width="3"/><circle cx="70" cy="77" r="3.500" fill="#424b55"/></svg></button>
      <button disabled class="relative flex h-[43px] w-[61px] items-center justify-center rounded-xs border border-[#38424c] bg-[#424b55] text-[#323b45]"><span class="absolute top-0 left-px">F8</span>
        <svg class="h-[31px] w-7"><use href="#floppy"/></svg></button>
    </div>
    <div class="flex gap-[7px]">
      <button class="relative flex h-[43px] w-[61px] items-center justify-center rounded-xs border border-[#38424c] bg-[#424b55]"><span class="absolute top-0 left-px">F9</span>
        <svg class="ml-1 h-8 w-[31px]"><use href="#tool-change"/></svg></button>
      <button class="relative flex h-[43px] w-[61px] items-center justify-center rounded-xs border border-[#38424c] bg-[#424b55]"><span class="absolute top-0 left-px">F10</span>
        <svg class="h-[31px] w-[22px]"><use href="#page"/></svg></button>
      <button class="relative flex h-[43px] w-[61px] items-center justify-center rounded-xs border border-[#38424c] bg-[#424b55]"><span class="absolute top-0 left-px">F11</span>
        <svg class="h-[31px] w-[26px]"><use href="#webcam"/></svg></button>
      <button class="relative flex h-[43px] w-[61px] items-center justify-center rounded-xs border border-[#38424c] bg-[#424b55]"><span class="absolute top-0 left-px">F12</span>
        <svg class="ml-px h-[31px] w-[33px]" viewBox="0 0 100 92"><use href="#rack"/><path d="M79 62V84M73 64H85" stroke="#424b55" stroke-width="5"/></svg></button>
    </div>
    <button class="flex h-[43px] w-[25px] flex-col items-center justify-end gap-1.5 rounded-xs border border-[#38424c] bg-[#424b55]">
      <svg class="h-[9px] w-[17px]" viewBox="0 0 51 27"><rect width="51" height="27" rx="3" fill="#8f99a4"/><path d="M4 6H47" stroke="#e6dc1e" stroke-width="5" stroke-dasharray="5 2"/><path d="M4 14H47M4 20H47" stroke="#5b656e" stroke-width="2.500" stroke-dasharray="4 3"/></svg>
      1/3
    </button>
    <div class="-ml-2.5 grid grid-cols-2 gap-[3px]">
      <button class="col-start-2 h-5 w-[41px] rounded-xs border border-[#38424c] bg-[#424b55]"><u>M</u>enu</button>
      <button class="h-5 w-[41px] rounded-xs border border-[#38424c] bg-[#424b55]"><u>H</u>elp</button>
      <button class="h-5 w-[41px] rounded-xs border border-[#38424c] bg-[#424b55]">...</button>
    </div>
  </footer>

  <!-- Status bar -->
  <div class="flex h-3 shrink-0 items-center justify-end border-t border-[#7f8020] pr-px text-[#c3ccd5]">
    <span class="mr-3">[mm]</span>
    <span class="mr-7">[°]</span>
    <span class="mr-4">29.08.2024</span>
    <span class="mr-1">13:54:30</span>
    <svg class="h-[9px] w-[9px]" viewBox="0 0 27 25"><path d="M13.500 2L26 24H1Z" fill="none" stroke="#d6cc1a" stroke-width="2.500"/><path d="M13.500 8V17M13.500 19V22" stroke="#d6cc1a" stroke-width="3"/></svg>
  </div>

  <script>
    const storageRows = document.getElementById('storageRows');
    const places = ['D2-P29', 'D2-P30', 'D2-P31', 'D2-P32', 'D2-P33', 'D2-P34', 'D2-P35', 'D2-P36', 'D2-P37'];
    const selected = 'D2-P31';

    places.forEach((place, index) => {
      const row = document.createElement('tr');
      let color = index % 2 ? 'bg-[#a3adb8]' : 'bg-[#bbc5d0]';
      if (place === selected) color = 'bg-[#f0e600]';
      row.className = `h-[22px] *:p-0 ${color}`;
      row.innerHTML = `
        <td><div class="flex items-center justify-between pl-[3px] pr-0.5">01.»keeper 2000« <svg class="h-1.5 w-2.5 text-[#6d7782]"><use href="#eye"/></svg></div></td>
        <td><div class="pl-0.5">Drehbereich_Werkzeugschrank</div></td>
        <td><div class="pl-0.5">${place}</div></td>
        <td><svg class="mx-auto h-[15px] w-[15px] text-[#6d7782]"><use href="#globe"/></svg></td>
        <td><div class="flex items-center gap-[15px] pl-3 text-[#6d7782]"><svg class="h-[13px] w-4"><use href="#check"/></svg><svg class="h-1.5 w-2.5"><use href="#eye"/></svg></div></td>
        <td><div class="pr-5 text-right">1</div></td>
        <td><div class="pr-5 text-right">1</div></td>
        <td></td>
        <td><input type="checkbox" aria-label="Standard ${place}" class="mx-auto block h-[18px] w-[31px] appearance-none rounded-full bg-[#46505a] p-[3px] before:block before:h-3 before:w-3 before:rounded-full before:bg-[#949ea9] checked:before:ml-[13px]" /></td>
      `;
      storageRows.appendChild(row);
    });

    // every 3D view carries the same controls
    const controls = ['home', 'orbit', 'zoom-area', 'zoom', 'pan', 'reset', 'expand'];
    document.querySelectorAll('[data-viewer]').forEach((bar) => {
      controls.forEach((name) => {
        const button = document.createElement('button');
        button.setAttribute('aria-label', name);
        button.innerHTML = `<svg class="h-3.5 w-3.5"><use href="#${name}"/></svg>`;
        bar.appendChild(button);
      });
    });
  </script>

</body>
</html>
